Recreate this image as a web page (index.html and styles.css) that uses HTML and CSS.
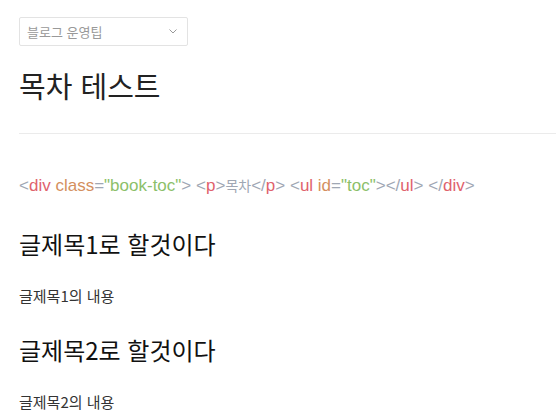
FILE: index.html
```html
<!DOCTYPE html>
<html lang="ko">
<head>
<meta charset="utf-8">
<link rel="stylesheet" href="styles.css">
</head>
<body>
<main class="page">
  <div class="category-select">
    <span class="category-label">블로그 운영팁</span>
    <svg class="chevron" width="8" height="5" viewBox="0 0 8 5"><path d="M0.5 0.5 L4 4 L7.5 0.5" fill="none" stroke="#999" stroke-width="1"/></svg>
  </div>
  <h1 class="post-title">목차 테스트</h1>
  <hr class="divider">
  <p class="code-line"><span class="punc">&lt;</span><span class="tag">div</span> <span class="attr">class</span><span class="punc">=</span><span class="str">"book-toc"</span><span class="punc">&gt;</span> <span class="punc">&lt;</span><span class="tag">p</span><span class="punc">&gt;</span><span class="ko">목차</span><span class="punc">&lt;/</span><span class="tag">p</span><span class="punc">&gt;</span> <span class="punc">&lt;</span><span class="tag">ul</span> <span class="attr">id</span><span class="punc">=</span><span class="str">"toc"</span><span class="punc">&gt;&lt;/</span><span class="tag">ul</span><span class="punc">&gt;</span> <span class="punc">&lt;/</span><span class="tag">div</span><span class="punc">&gt;</span></p>
  <h2 class="section-title first">글제목1로 할것이다</h2>
  <p class="section-text">글제목1의 내용</p>
  <h2 class="section-title">글제목2로 할것이다</h2>
  <p class="section-text">글제목2의 내용</p>
</main>
</body>
</html>
```
FILE: styles.css
```css
html, body {
  margin: 0;
  padding: 0;
  background: #fff;
}
body {
  font-family: "Noto Sans CJK KR", sans-serif;
  color: #222;
}
.page {
  padding: 17px 0 0 19px;
}
.category-select {
  height: 27px;
  border: 1px solid #e3e3e3;
  border-radius: 2px;
  display: flex;
  align-items: center;
  justify-content: space-between;
  padding: 0 10px 0 7px;
  box-sizing: content-box;
  width: 150px;
}
.category-label {
  font-size: 13px;
  color: #999;
}
.chevron {
  display: block;
}
.post-title {
  margin: 21px 0 0;
  font-size: 29px;
  font-weight: 400;
  line-height: 36px;
  color: #222;
}
.divider {
  margin: 30px 0 0;
  border: 0;
  height: 1px;
  background: #ebebeb;
}
.code-line {
  margin: 41px 0 0;
  font-family: "Liberation Sans", "Noto Sans CJK KR", sans-serif;
  font-size: 17px;
  line-height: 20px;
  color: #a0a7b4;
}
.code-line .ko {
  font-family: "Noto Sans CJK KR", sans-serif;
  font-size: 14px;
}
.punc { color: #a0a7b4; }
.tag { color: #e0626d; }
.attr { color: #d48f5e; }
.str { color: #8cbf6a; }
.section-title {
  margin: 27px 0 0;
  font-size: 24px;
  font-weight: 400;
  line-height: 32px;
  color: #111;
}
.section-title.first {
  margin-top: 32px;
}
.section-text {
  margin: 25px 0 0;
  font-size: 15px;
  line-height: 22px;
  color: #333;
}
```
